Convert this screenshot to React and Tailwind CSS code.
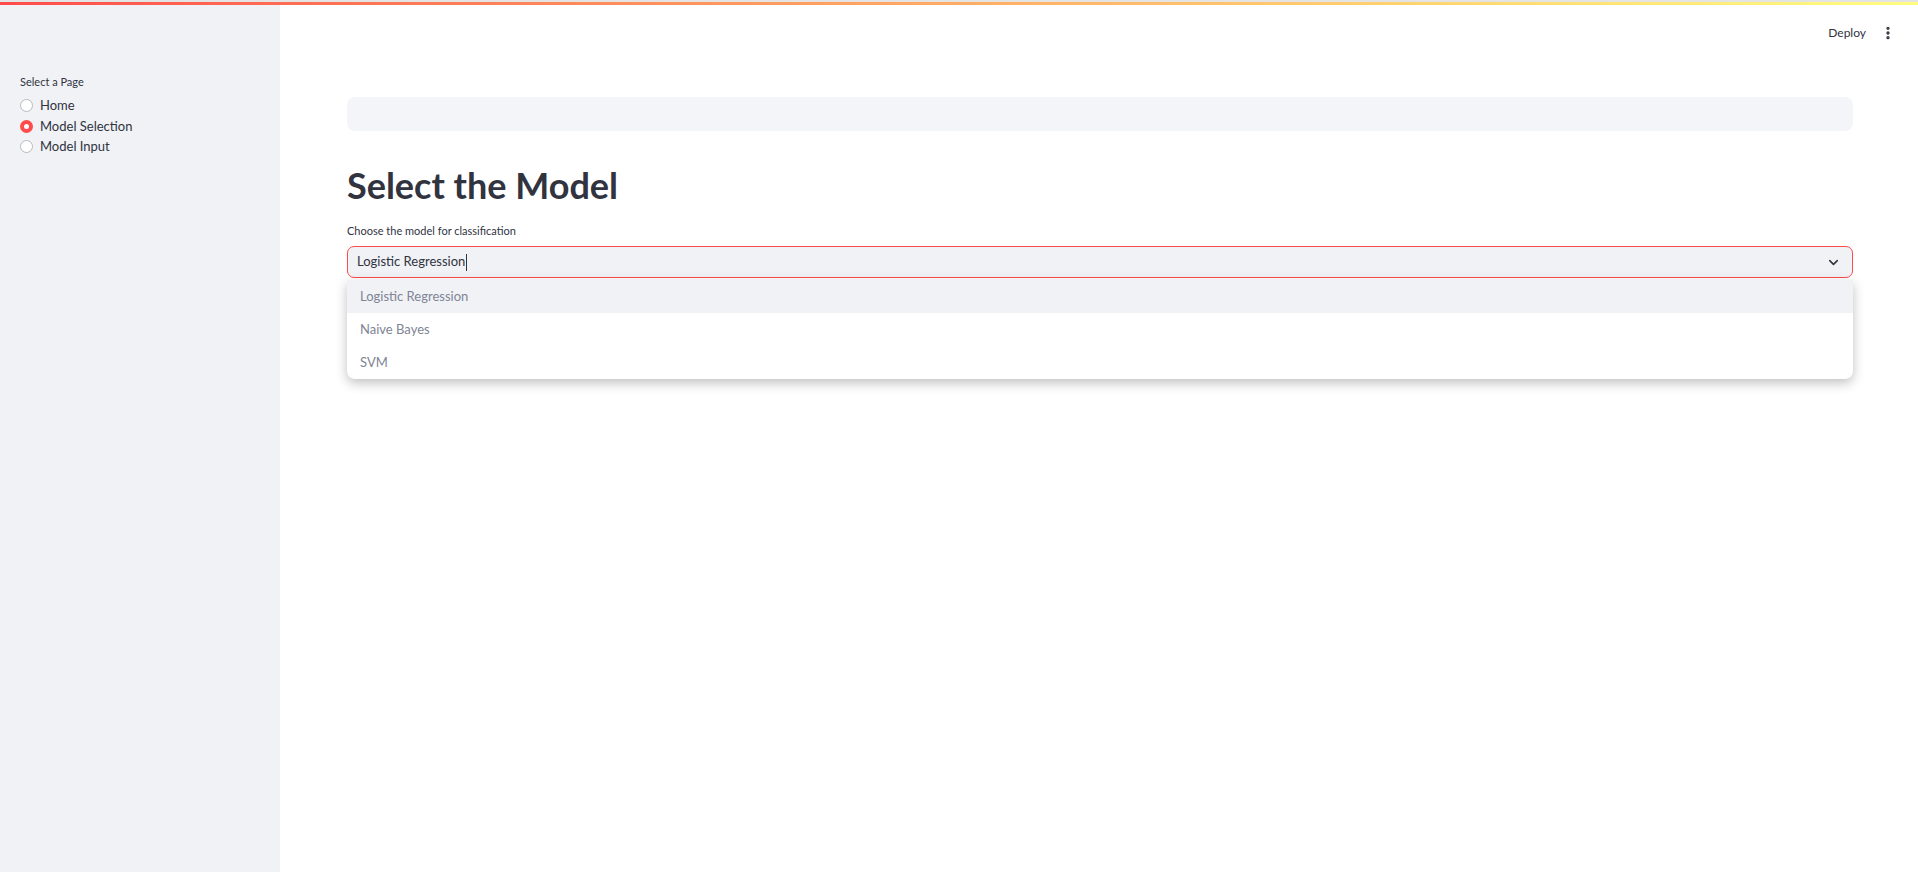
import { ChevronDown, EllipsisVertical } from 'lucide-react';

const font = { fontFamily: 'Lato, "Noto Sans", sans-serif' };

function Radio({ label, checked }) {
  return (
    <label className="flex items-center gap-[7px] h-[20.5px] text-[13px] text-[#31333f]">
      {checked ? (
        <span className="w-[13px] h-[13px] rounded-full bg-[#ff4b4b] flex items-center justify-center">
          <span className="w-[5px] h-[5px] rounded-full bg-white" />
        </span>
      ) : (
        <span className="w-[13px] h-[13px] rounded-full border border-[#b8bac2] bg-white" />
      )}
      {label}
    </label>
  );
}

export default function App() {
  const options = ['Logistic Regression', 'Naive Bayes', 'SVM'];
  return (
    <div className="h-[872px] w-[1918px] flex flex-col bg-white overflow-hidden" style={font}>
      <div className="h-[2px] bg-[#e4e4e4]" />
      <div className="h-[3px] bg-gradient-to-r from-[#ff4b4b] to-[#fffd80]" />
      <div className="flex flex-1">
        <aside className="w-[280px] bg-[#f0f2f6] pt-[69px] px-[20px]">
          <p className="text-[11px] text-[#31333f] mb-[5px]">Select a Page</p>
          <div className="flex flex-col">
            <Radio label="Home" />
            <Radio label="Model Selection" checked />
            <Radio label="Model Input" />
          </div>
        </aside>
        <main className="flex-1 flex flex-col">
          <div className="flex justify-end items-center gap-[14px] h-[55px] pr-[22px]">
            <span className="text-[12px] text-[#31333f]">Deploy</span>
            <EllipsisVertical size={16} strokeWidth={3} className="text-[#31333f]" />
          </div>
          <div className="pl-[67px] pr-[65px] pt-[37px]">
            <div className="h-[34px] rounded-[8px] bg-[#f4f5f8]" />
            <h1 className="mt-[32px] text-[36px] font-bold text-[#31333f] leading-[44px]">Select the Model</h1>
            <p className="mt-[17px] text-[11px] text-[#31333f] leading-[14px]">Choose the model for classification</p>
            <div className="relative mt-[8px]">
              <div className="h-[32px] rounded-[7px] border border-[#ff4b4b] bg-[#f0f2f6] flex items-center pl-[9px] pr-[11px]">
                <span className="text-[13px] text-[#31333f]">Logistic Regression</span>
                <span className="w-px h-[17px] bg-[#31333f] ml-[1px]" />
                <ChevronDown size={15} strokeWidth={2.5} className="ml-auto text-[#31333f]" />
              </div>
              <div className="absolute left-0 right-0 top-[34px] bg-white rounded-b-[8px] shadow-[0_4px_12px_rgba(0,0,0,0.25)] overflow-hidden">
                {options.map((o, i) => (
                  <div
                    key={o}
                    className={`h-[33px] flex items-center pl-[13px] text-[13px] text-[#808495] ${i === 0 ? 'bg-[#f0f2f6]' : ''}`}
                  >
                    {o}
                  </div>
                ))}
              </div>
            </div>
          </div>
        </main>
      </div>
    </div>
  );
}
